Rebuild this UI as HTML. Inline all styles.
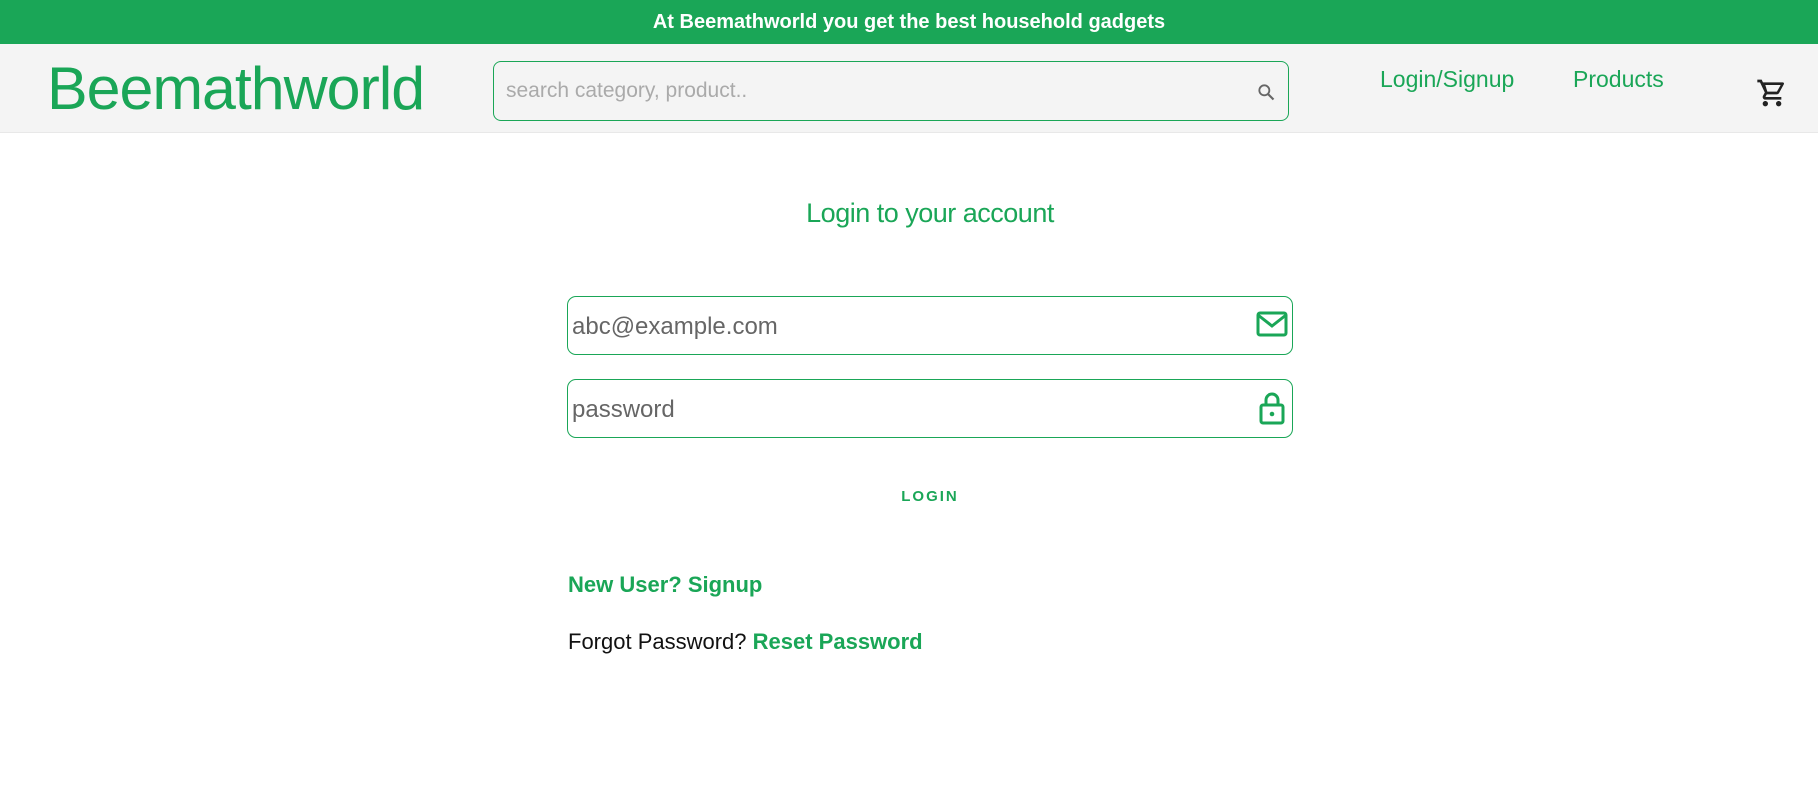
<!DOCTYPE html>
<html><head><meta charset="utf-8"><style>
*{margin:0;padding:0;box-sizing:border-box}
body{width:1818px;height:793px;background:#fff;font-family:"Liberation Sans",sans-serif;position:relative;overflow:hidden}
.top{height:44px;background:#1aa657;color:#fff;font-weight:bold;font-size:20px;text-align:center;line-height:44px}
.hdr{position:absolute;top:44px;left:0;width:1818px;height:89px;background:#f4f4f4;border-bottom:1px solid #e8e8e8}
.logo{position:absolute;left:47px;top:10px;font-size:60px;color:#1aa657;font-weight:300;letter-spacing:-1px;transform:scaleX(1.015);transform-origin:left}
.search{position:absolute;left:493px;top:17px;width:796px;height:60px;border:1px solid #1aa657;border-radius:8px;background:#f4f4f4}
.search span{position:absolute;left:12px;top:17px;font-size:21px;color:#aaa}
.nav{position:absolute;top:22px;font-size:23px;color:#1aa657}
.title{position:absolute;top:198px;width:100%;text-align:center;left:0;font-size:27px;color:#1aa657;padding-left:42px;letter-spacing:-0.5px}
.inp{position:absolute;left:567px;width:726px;height:59px;border:1px solid #1aa657;border-radius:9px}
.inp span{position:absolute;left:4px;top:16px;font-size:24px;color:#666}
.inp svg{position:absolute;right:4px}
.login{position:absolute;top:488px;left:0;width:100%;text-align:center;padding-left:42px;font-size:15px;font-weight:bold;color:#1aa657;letter-spacing:2px}
.a{position:absolute;left:568px;font-size:22px;font-weight:bold;color:#1aa657}
</style></head><body>
<div class="top">At Beemathworld you get the best household gadgets</div>
<div class="hdr">
<div class="logo">Beemathworld</div>
<div class="search"><span>search category, product..</span>
<svg style="position:absolute;right:12px;top:20px" width="20" height="20" viewBox="0 0 24 24"><circle cx="10" cy="10" r="6" fill="none" stroke="#666" stroke-width="2.2"/><path d="M14.5 14.5L21 21" stroke="#666" stroke-width="2.6"/></svg></div>
<div class="nav" style="left:1380px">Login/Signup</div>
<div class="nav" style="left:1573px">Products</div>
<svg style="position:absolute;left:1756px;top:33px" width="32" height="32" viewBox="0 0 24 24"><path fill="#222" d="M7 18c-1.1 0-2 .9-2 2s.9 2 2 2 2-.9 2-2-.9-2-2-2zM1 2v2h2l3.6 7.59-1.35 2.450c-.16.28-.25.61-.25.96 0 1.1.9 2 2 2h12v-2H7.42c-.14 0-.25-.11-.25-.25l.03-.12.9-1.63h7.45c.75 0 1.41-.41 1.750-1.03l3.58-6.49A1 1 0 0 0 20 4H5.21l-.94-2H1zm16 16c-1.1 0-2 .9-2 2s.9 2 2 2 2-.9 2-2-.9-2-2-2z"/><path d="M7 6h11.5l-2.8 5H8.5z" fill="#f4f4f4"/></svg>
</div>
<div class="title">Login to your account</div>
<div class="inp" style="top:296px"><span>abc@example.com</span>
<svg style="top:13px" width="32" height="28" viewBox="0 0 32 28"><rect x="2" y="3" width="28" height="22" rx="2" fill="none" stroke="#1aa657" stroke-width="3"/><path d="M2 5l14 11 14-11" fill="none" stroke="#1aa657" stroke-width="3"/></svg></div>
<div class="inp" style="top:379px"><span>password</span>
<svg style="top:10px;right:7px" width="26" height="36" viewBox="0 0 26 36"><path d="M7 16V10a6 6 0 0 1 12 0v6" fill="none" stroke="#1aa657" stroke-width="3"/><rect x="2" y="15" width="22" height="18" rx="2" fill="none" stroke="#1aa657" stroke-width="3"/><circle cx="13" cy="24" r="2.3" fill="#1aa657"/></svg></div>
<div class="login">LOGIN</div>
<div class="a" style="top:572px">New User? Signup</div>
<div class="a" style="top:629px"><span style="font-weight:normal;color:#111">Forgot Password?</span> Reset Password</div>
</body></html>
